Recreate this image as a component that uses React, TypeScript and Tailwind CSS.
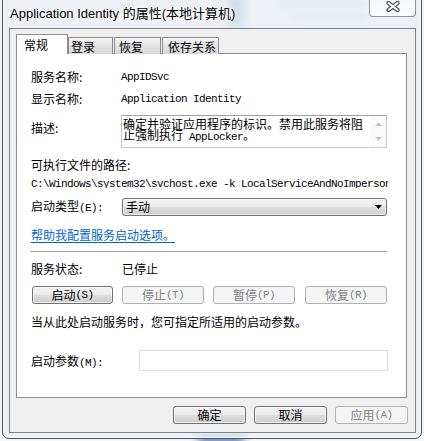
import React from "react";

const MONO = "font-['Liberation_Mono',monospace] text-[11px] tracking-[-0.6px]";

function M({ children }: { children: React.ReactNode }) {
  return <span className={MONO}>{children}</span>;
}

function Btn({
  label,
  hk,
  w,
  disabled,
}: {
  label: string;
  hk?: string;
  w: string;
  disabled?: boolean;
}) {
  const base =
    "h-[18px] flex items-center justify-center rounded-[3px] border leading-[12px] text-[12px] whitespace-nowrap";
  const on =
    "border-[#707070] bg-[linear-gradient(#f2f2f2_0%,#ebebeb_50%,#dddddd_50%,#cfcfcf_100%)] shadow-[inset_0_0_0_1px_rgba(255,255,255,0.7)] text-black";
  const off = "border-[#adb2b5] bg-[#f4f4f4] text-[#838383]";
  return (
    <div className={`${base} ${w} ${disabled ? off : on}`}>
      <span>{label}</span>
      {hk && <M>{hk}</M>}
    </div>
  );
}

export default function App() {
  return (
    <div className="relative h-[441px] w-[424px] overflow-hidden bg-[#f4f6f9] font-['Noto_Sans_CJK_SC',sans-serif] text-[12px] text-black">
      {/* blurred desktop behind the glass frame */}
      <div className="absolute left-[228px] top-[-6px] h-[34px] w-[16px] bg-[#2a5a9a] opacity-60 blur-[5px]" />
      <div className="absolute left-[278px] top-[1px] h-[5px] w-[90px] bg-[#8fb0dc] opacity-50 blur-[3px]" />
      <div className="absolute left-[290px] top-[15px] h-[5px] w-[78px] bg-[#8fb0dc] opacity-50 blur-[3px]" />
      <div className="absolute left-[198px] top-[433px] h-[14px] w-[46px] bg-[#3b6db3] opacity-70 blur-[4px]" />

      <div className="relative ml-[2px] mt-[-12px] flex h-[451px] w-[420px] flex-col rounded-[7px] border border-[#4b5058] bg-[rgba(234,239,245,0.78)] shadow-[inset_0_0_0_1px_rgba(255,255,255,0.85)]">
        {/* title bar */}
        <div className="flex h-[39px] shrink-0 items-start justify-between">
          <div className="ml-[7px] mt-[15px] whitespace-nowrap leading-[18px] text-black [text-shadow:0_0_8px_#fff,0_0_4px_#fff]">
            <span className="font-['Liberation_Sans',sans-serif] text-[13px]">Application Identity </span>
            <span className="text-[13px]">的属性</span>
            <span className="font-['Liberation_Sans',sans-serif] text-[13px]">(</span>
            <span className="text-[13px]">本地计算机</span>
            <span className="font-['Liberation_Sans',sans-serif] text-[13px]">)</span>
          </div>
          <div className="mr-[5px] flex h-[28px] w-[47px] items-end justify-center rounded-b-[4px] border border-t-0 border-[#8c939c] bg-[linear-gradient(rgba(255,255,255,0.35),rgba(255,255,255,0.7))] pb-[4px] shadow-[inset_0_0_0_1px_rgba(255,255,255,0.6)]">
            <svg width="14" height="11" viewBox="0 0 14 11">
              <path d="M2.5 2 L11.5 9 M11.5 2 L2.5 9" stroke="#4a4f57" strokeWidth="4.2" strokeLinecap="round" />
              <path d="M2.5 2 L11.5 9 M11.5 2 L2.5 9" stroke="#ffffff" strokeWidth="2" strokeLinecap="round" />
            </svg>
          </div>
        </div>

        {/* client area */}
        <div className="mb-[5px] ml-[6px] mr-[5px] flex flex-1 flex-col border border-[#7f8389] bg-[#f0f0f0]">
          <div className="pl-[6px] pr-[8px] pt-[5px]">
            {/* tabs */}
            <div className="flex h-[20px] items-end">
              <div className="relative z-10 h-[20px] w-[52px] border border-b-0 border-[#898c95] bg-white pl-[7px] pt-[3px] leading-[13px]">
                常规
              </div>
              <div className="h-[17px] w-[45px] border border-b-0 border-[#898c95] bg-[linear-gradient(#f4f4f4,#e3e3e3_50%,#d8d8d8)] pl-[2px] pt-[2px] leading-[13px]">
                登录
              </div>
              <div className="ml-[1px] h-[17px] w-[47px] border border-b-0 border-[#898c95] bg-[linear-gradient(#f4f4f4,#e3e3e3_50%,#d8d8d8)] pl-[4px] pt-[2px] leading-[13px]">
                恢复
              </div>
              <div className="ml-[1px] h-[17px] w-[57px] border border-b-0 border-[#898c95] bg-[linear-gradient(#f4f4f4,#e3e3e3_50%,#d8d8d8)] pl-[5px] pt-[2px] leading-[13px]">
                依存关系
              </div>
            </div>

            {/* tab panel */}
            <div className="-mt-px flex h-[345px] flex-col border border-[#898c95] bg-white pl-[14px]">
              <div className="mt-[17px] flex h-[12px] items-center leading-[12px]">
                <div className="w-[90px]">服务名称:</div>
                <M>AppIDSvc</M>
              </div>
              <div className="mt-[10px] flex h-[12px] items-center leading-[12px]">
                <div className="w-[90px]">显示名称:</div>
                <M>Application Identity</M>
              </div>
              <div className="mt-[10px] flex items-start">
                <div className="mt-[7px] h-[12px] w-[90px] leading-[12px]">描述:</div>
                <div className="flex h-[33px] w-[266px] border border-[#c5cad1] border-t-[#9fa3a8] bg-white">
                  <div className="flex-1 pl-[1px] pt-[2px] leading-[11px] whitespace-nowrap">
                    确定并验证应用程序的标识。禁用此服务将阻
                    <br />
                    止强制执行<M> AppLocker</M>。
                  </div>
                  <div className="flex w-[16px] flex-col items-center justify-between bg-[#fbfbfb] py-[6px]">
                    <svg width="7" height="4" viewBox="0 0 7 4">
                      <path d="M0 4 L3.5 0 L7 4 Z" fill="#c3c7cc" />
                    </svg>
                    <svg width="7" height="4" viewBox="0 0 7 4">
                      <path d="M0 0 L3.5 4 L7 0 Z" fill="#c3c7cc" />
                    </svg>
                  </div>
                </div>
              </div>
              <div className="mt-[11px] h-[12px] leading-[12px]">可执行文件的路径:</div>
              <div className="mt-[5px] h-[12px] w-[357px] overflow-hidden whitespace-nowrap leading-[12px]">
                <M>C:\Windows\system32\svchost.exe -k LocalServiceAndNoImpersonation</M>
              </div>
              <div className="mt-[10px] flex h-[18px] items-center">
                <div className="w-[91px] leading-[12px]">
                  启动类型<M>(E):</M>
                </div>
                <div className="flex h-[18px] w-[265px] items-center justify-between rounded-[3px] border border-[#707070] bg-[linear-gradient(#f2f2f2_0%,#ebebeb_50%,#dddddd_50%,#cfcfcf_100%)] pl-[3px] pr-[4px] leading-[12px] shadow-[inset_0_0_0_1px_rgba(255,255,255,0.6)]">
                  <span>手动</span>
                  <svg width="7" height="4" viewBox="0 0 7 4">
                    <path d="M0 0 L7 0 L3.5 4 Z" fill="#000" />
                  </svg>
                </div>
              </div>
              <div className="mt-[13px] h-[12px] leading-[12px]">
                <span className="text-[#0066cc] underline underline-offset-[2px]">帮助我配置服务启动选项。</span>
              </div>
              <div className="mt-[10px] h-px w-[356px] bg-[#a0a0a0]" />
              <div className="mt-[11px] flex h-[12px] items-center leading-[12px]">
                <div className="w-[91px]">服务状态:</div>
                <div>已停止</div>
              </div>
              <div className="ml-[1px] mt-[11px] flex h-[18px]">
                <Btn label="启动" hk="(S)" w="w-[81px]" />
                <div className="ml-[9px]">
                  <Btn label="停止" hk="(T)" w="w-[82px]" disabled />
                </div>
                <div className="ml-[9px]">
                  <Btn label="暂停" hk="(P)" w="w-[82px]" disabled />
                </div>
                <div className="ml-[10px]">
                  <Btn label="恢复" hk="(R)" w="w-[82px]" disabled />
                </div>
              </div>
              <div className="mt-[12px] h-[12px] leading-[12px]">当从此处启动服务时，您可指定所适用的启动参数。</div>
              <div className="mt-[22px] flex h-[21px] items-center">
                <div className="mt-[3px] w-[108px] leading-[12px]">
                  启动参数<M>(M):</M>
                </div>
                <div className="h-[21px] w-[249px] border border-[#dcdfe3] bg-white" />
              </div>
            </div>
          </div>

          {/* dialog buttons */}
          <div className="mt-[8px] flex justify-end gap-[8px] pr-[7px]">
            <Btn label="确定" w="w-[73px]" />
            <Btn label="取消" w="w-[73px]" />
            <Btn label="应用" hk="(A)" w="w-[73px]" disabled />
          </div>
        </div>
      </div>
    </div>
  );
}
